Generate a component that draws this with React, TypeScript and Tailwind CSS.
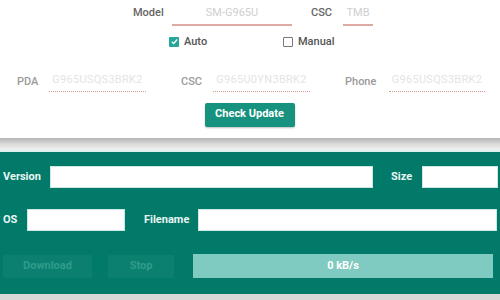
import React from "react";

const font = { fontFamily: "Roboto, 'Liberation Sans', sans-serif" };

const Check: React.FC<{ checked?: boolean }> = ({ checked }) =>
  checked ? (
    <span className="flex h-[10px] w-[10px] items-center justify-center rounded-[1px] bg-[#26a69a]">
      <svg viewBox="0 0 10 10" className="h-[9px] w-[9px]">
        <path d="M2 5.2 L4.1 7.2 L8 2.8" fill="none" stroke="white" strokeWidth="1.4" />
      </svg>
    </span>
  ) : (
    <span className="h-[10px] w-[10px] rounded-[1px] border border-[#777] bg-white" />
  );

const FwField: React.FC<{ label: string; value: string; labelW: string; inputW: string }> = ({
  label,
  value,
  labelW,
  inputW,
}) => (
  <div className="flex items-center">
    <span className={`${labelW} text-[11px] font-medium text-[#9a9a9a]`}>{label}</span>
    <span
      className={`${inputW} border-b border-dotted border-b-[#d69a94] pb-[2px] text-center text-[11px] tracking-[0.3px] text-[#e4e4e4]`}
    >
      {value}
    </span>
  </div>
);

const App: React.FC = () => {
  return (
    <div className="h-[300px] w-[500px] overflow-hidden bg-[#d8d8d8]" style={font}>
      <div className="flex h-[138px] flex-col bg-white">
        {/* model / csc */}
        <div className="flex items-end pl-[133px] pt-[5px]">
          <span className="mb-[4px] w-[39px] text-[11px] font-medium text-[#666]">Model</span>
          <span className="w-[120px] border-b-2 border-b-[#e0aaa4] pb-[2px] text-center text-[11px] text-[#cfcfcf]">
            SM-G965U
          </span>
          <span className="mb-[4px] ml-[19px] w-[32px] text-[11px] font-medium text-[#666]">CSC</span>
          <span className="w-[30px] border-b-2 border-b-[#e0aaa4] pb-[2px] text-center text-[11px] text-[#cfcfcf]">
            TMB
          </span>
        </div>
        {/* auto / manual */}
        <div className="mt-[8px] flex items-center pl-[169px]">
          <Check checked />
          <span className="ml-[5px] w-[99px] text-[11px] font-medium text-[#555]">Auto</span>
          <Check />
          <span className="ml-[5px] text-[11px] font-medium text-[#555]">Manual</span>
        </div>
        {/* firmware */}
        <div className="mt-[22px] flex items-center pl-[17px]">
          <FwField label="PDA" value="G965USQS3BRK2" labelW="w-[32px]" inputW="w-[97px]" />
          <div className="ml-[35px]">
            <FwField label="CSC" value="G965U0YN3BRK2" labelW="w-[32px]" inputW="w-[97px]" />
          </div>
          <div className="ml-[35px]">
            <FwField label="Phone" value="G965USQS3BRK2" labelW="w-[44px]" inputW="w-[96px]" />
          </div>
        </div>
        <div className="mt-[11px] flex justify-center pr-[1px]">
          <button className="h-[24px] w-[90px] rounded-[2px] bg-[#16927f] text-[11px] font-bold text-white shadow-[0_1px_2px_rgba(0,0,0,0.25)]">
            Check Update
          </button>
        </div>
      </div>
      <div className="h-[12px] bg-gradient-to-b from-[#b4b4b4] via-[#dadada] to-[#f2f2f2]" />
      <div className="flex h-[144px] flex-col border-t-2 border-[#dff1ee] bg-[#017a6a] text-[11px] font-bold text-[#eaf6f4]">
        <div className="mt-[14px] flex items-center">
          <span className="ml-[3px] w-[47px]">Version</span>
          <div className="h-[22px] w-[323px] border border-[#cde8e4] bg-white" />
          <span className="ml-[18px] w-[31px]">Size</span>
          <div className="h-[22px] w-[76px] border border-[#cde8e4] bg-white" />
        </div>
        <div className="mt-[21px] flex items-center">
          <span className="ml-[3px] w-[24px]">OS</span>
          <div className="h-[22px] w-[98px] border border-[#cde8e4] bg-white" />
          <span className="ml-[19px] w-[54px]">Filename</span>
          <div className="h-[22px] w-[299px] border border-[#cde8e4] bg-white" />
        </div>
        <div className="mt-[23px] flex items-center">
          <button className="ml-[3px] h-[23px] w-[89px] rounded-[2px] bg-[#0b8070] text-[11px] font-bold text-[#2f9c8c]">
            Download
          </button>
          <button className="ml-[16px] h-[23px] w-[66px] rounded-[2px] bg-[#0b8070] text-[11px] font-bold text-[#2f9c8c]">
            Stop
          </button>
          <div className="ml-[19px] flex h-[24px] w-[300px] items-center justify-center bg-[#80cbc1] text-white">
            0 kB/s
          </div>
        </div>
      </div>
    </div>
  );
};

export default App;
